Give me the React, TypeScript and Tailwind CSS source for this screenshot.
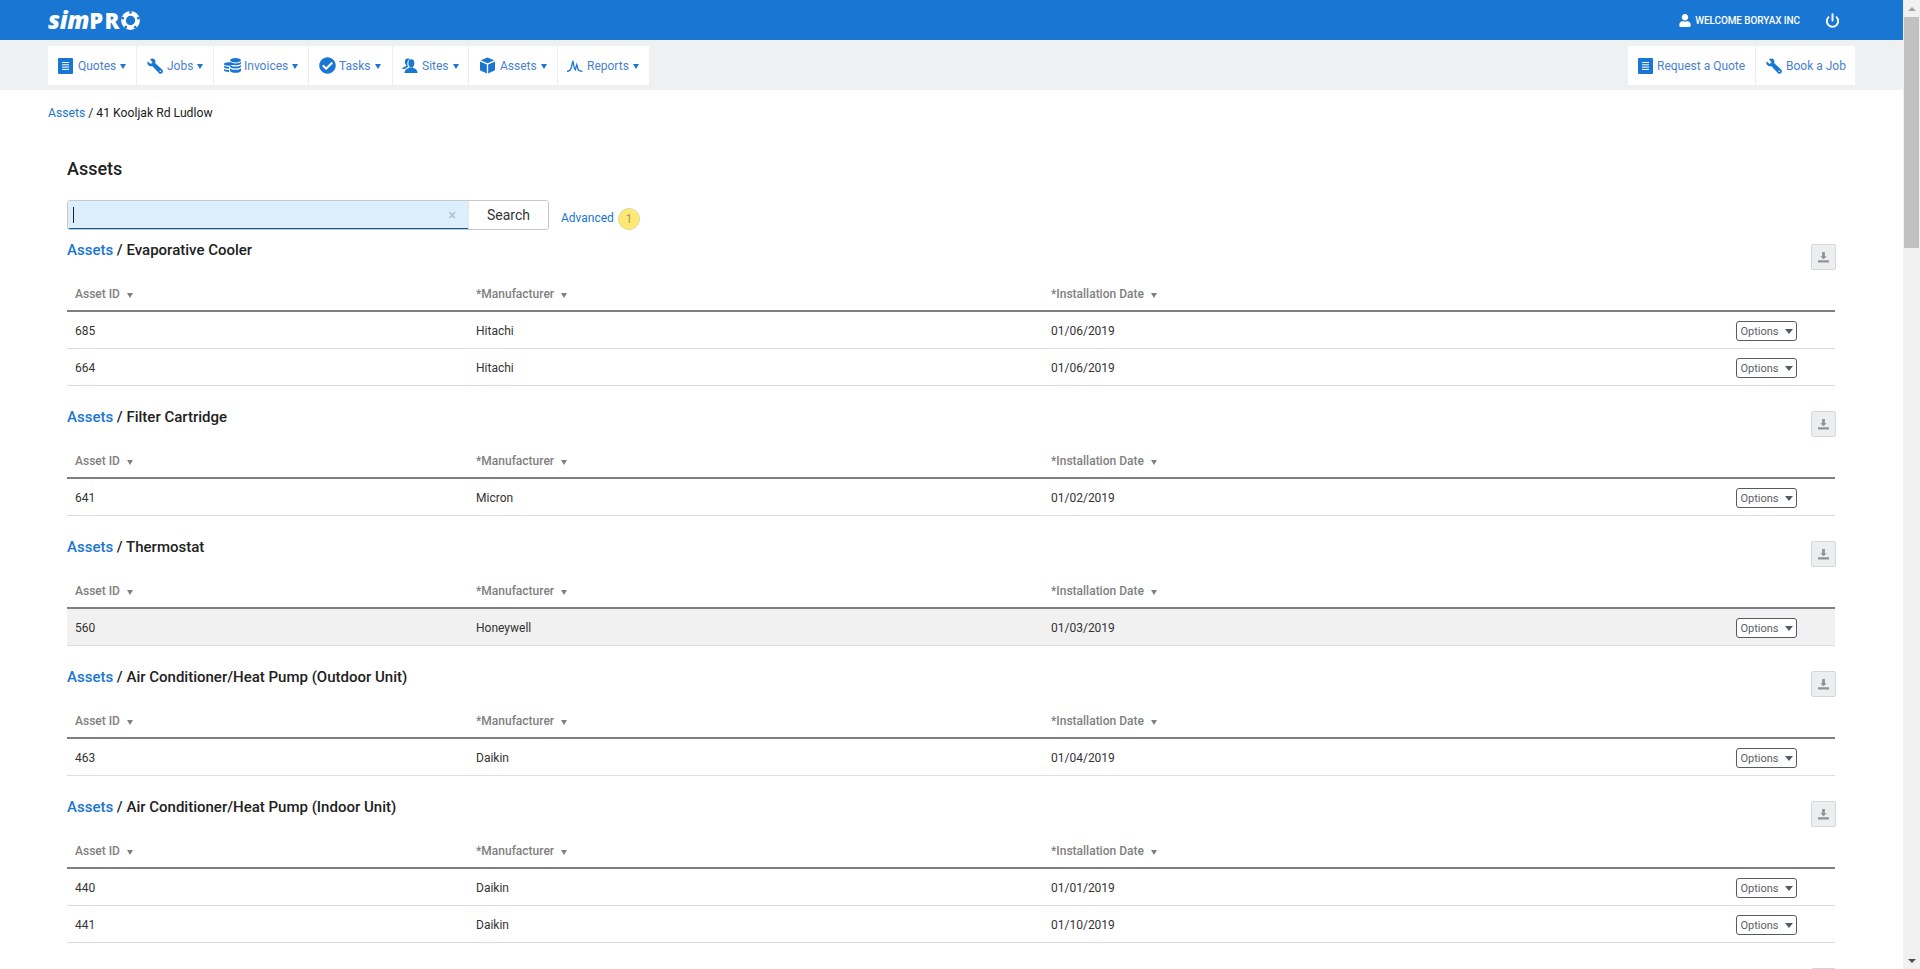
import React from "react";
import { FaCheckCircle, FaUser } from "react-icons/fa";
import { Power } from "lucide-react";

const blue = "#1976d2";

const DocIcon = () => (
  <svg viewBox="0 0 15 16" className="w-[15px] h-[16px] shrink-0">
    <rect x="0" y="0" width="15" height="16" rx="1" fill={blue} />
    <path d="M4 4.500h7M4 6.800h7M4 9.100h7M4 11.400h7" stroke="#fff" strokeWidth="1" />
  </svg>
);

const WrenchIcon = () => (
  <svg viewBox="0 0 16 16" className="w-[16px] h-[16px] shrink-0">
    <path
      d="M.8 3.500 3.600 6l2-1.800L3 1.200C5-.3 7.800.3 8.300 2.800c.2 1 0 1.800-.2 2.300l7 6.400c1.100 1 1.100 2.500.2 3.500-1 1-2.500 1-3.500-.1L5.200 7.900c-.8.300-1.800.3-2.600 0C.5 7.100-.3 5.300.8 3.500z"
      fill={blue}
    />
    <circle cx="13.300" cy="13.300" r="0.800" fill="#fff" />
  </svg>
);

const CoinsIcon = () => (
  <svg viewBox="0 0 17 15" className="w-[17px] h-[15px] shrink-0">
    <g fill={blue}>
      <ellipse cx="11.500" cy="2.200" rx="5.500" ry="2.200" />
      <path d="M6 3.800c1 1.100 3 1.600 5.500 1.600S16 4.900 17 3.800v1.500c0 1.200-2.500 2-5.500 2S6 6.500 6 5.300z" />
      <path d="M6 7c1 1.100 3 1.600 5.500 1.600S16 8.100 17 7v1.500c0 1.200-2.500 2-5.500 2S6 9.700 6 8.500z" />
      <path d="M6 10.200c1 1.100 3 1.600 5.500 1.600s4.500-.5 5.500-1.600v2.300c0 1.400-2.500 2.300-5.500 2.300S6 13.900 6 12.500z" />
      <ellipse cx="4.700" cy="6" rx="4.700" ry="1.700" />
      <path d="M0 7.500c1 1 2.700 1.400 5 1.400v1.800c-2.800 0-5-.7-5-1.700z" />
      <path d="M0 10.700c1 1 2.700 1.400 5 1.400v1.800c-2.800 0-5-.7-5-1.700z" />
    </g>
  </svg>
);

const SitesIcon = () => (
  <svg viewBox="0 0 18 17" className="w-[16px] h-[16px] shrink-0">
    <g fill={blue}>
      <path d="M6.500 0C4 0 3 2 3.200 4c.1 1.500.8 3 1.800 3.800-.2.600-.6 1-1.400 1.300C2 9.800.6 10.500 0 12h3.500c.8-1.200 2-1.800 3.500-2.300-.5-1-1-2.500-1-4C6 3 7.400 1 9.500 1 8.800.4 7.800 0 6.500 0z" />
      <ellipse cx="10.500" cy="5.500" rx="3.300" ry="4.500" />
      <path d="M8.500 9.500c-.2.800-1 1.300-2.200 1.800-1.700.7-3.100 1.800-3.600 5.200h15c-.5-3.400-1.900-4.500-3.600-5.200-1.200-.5-2-1-2.200-1.800-.6.500-1.300.8-1.700.8s-1.100-.3-1.700-.8z" />
    </g>
  </svg>
);

const CubeIcon = () => (
  <svg viewBox="0 0 16 17" className="w-[15px] h-[17px] shrink-0">
    <g fill={blue}>
      <path d="M8 0 15.200 3 8 6.100.8 3z" />
      <path d="M0 4.200 7.300 7.300V17L0 13.600z" />
      <path d="M16 4.200 8.700 7.300V17l7.300-3.400z" />
    </g>
  </svg>
);

const ReportsIcon = () => (
  <svg viewBox="0 0 16 12" className="w-[16px] h-[12px] shrink-0">
    <path
      d="M0 11.300c2.700 0 3.500-1 4.300-3.800L5.800.8l1.500 7 1 1.800 1.500-5 1.200 4.700c.6 1.600 1.500 2 4.500 2"
      fill="none"
      stroke={blue}
      strokeWidth="1.300"
    />
  </svg>
);

const Caret = () => <span className="inline-block ml-[4px] border-x-[3.5px] border-x-transparent border-t-[5px] border-t-[#1976d2] translate-y-[1px]" />;

const navItems = [
  { label: "Quotes", icon: <DocIcon />, cls: "w-[88px] pl-[10px] gap-[5px]" },
  { label: "Jobs", icon: <WrenchIcon />, cls: "w-[77px] pl-[10px] gap-[4px]" },
  { label: "Invoices", icon: <CoinsIcon />, cls: "w-[95px] pl-[10px] gap-[3px]" },
  { label: "Tasks", icon: <FaCheckCircle className="w-[17px] h-[17px] shrink-0 text-[#1976d2]" />, cls: "w-[84px] pl-[10px] gap-[3px]" },
  { label: "Sites", icon: <SitesIcon />, cls: "w-[76px] pl-[9px] gap-[4px]" },
  { label: "Assets", icon: <CubeIcon />, cls: "w-[89px] pl-[11px] gap-[5px]" },
  { label: "Reports", icon: <ReportsIcon />, cls: "w-[92px] pl-[9px] gap-[4px]" },
];

const Logo = () => (
  <div className="flex items-center text-white font-['Open_Sans',sans-serif] font-extrabold leading-none">
    <span className="italic text-[24px] tracking-[-0.3px]">sim</span>
    <span className="text-[22px] tracking-[1.5px]">PR</span>
    <svg viewBox="0 0 20 20" className="w-[19px] h-[19px]">
      <circle cx="10" cy="10" r="7.400" fill="none" stroke="#fff" strokeWidth="5" />
      <g fill={blue}>
        <circle cx="10" cy="1.500" r="1.400" />
        <circle cx="18.200" cy="7.500" r="1.400" />
        <circle cx="15" cy="17" r="1.400" />
        <circle cx="5" cy="17" r="1.400" />
        <circle cx="1.800" cy="7.500" r="1.400" />
      </g>
    </svg>
  </div>
);

const HeaderCell = ({ label }: { label: string }) => (
  <span className="flex items-center text-[12px] font-medium text-[#808080]">
    {label}
    <span className="ml-[7px] border-x-[3px] border-x-transparent border-t-[5px] border-t-[#808080] translate-y-[1px]" />
  </span>
);

type Row = { id: string; maker: string; date: string; hover?: boolean };

const sections: { title: string; rows: Row[] }[] = [
  {
    title: "Evaporative Cooler",
    rows: [
      { id: "685", maker: "Hitachi", date: "01/06/2019" },
      { id: "664", maker: "Hitachi", date: "01/06/2019" },
    ],
  },
  { title: "Filter Cartridge", rows: [{ id: "641", maker: "Micron", date: "01/02/2019" }] },
  { title: "Thermostat", rows: [{ id: "560", maker: "Honeywell", date: "01/03/2019", hover: true }] },
  { title: "Air Conditioner/Heat Pump (Outdoor Unit)", rows: [{ id: "463", maker: "Daikin", date: "01/04/2019" }] },
  {
    title: "Air Conditioner/Heat Pump (Indoor Unit)",
    rows: [
      { id: "440", maker: "Daikin", date: "01/01/2019" },
      { id: "441", maker: "Daikin", date: "01/10/2019" },
    ],
  },
  { title: "Air Conditioner/Heat Pump (Ducted)", rows: [] },
];

const AssetSection = ({ title, rows }: { title: string; rows: Row[] }) => (
  <section className="relative pt-[2px] last:pt-[4px]">
    <h3 className="h-[24px] text-[15px] font-medium leading-[24px] text-[#212121]">
      <a className="text-[#1976d2]">Assets</a> / {title}
    </h3>
    <button className="absolute right-[-1px] top-[8px] w-[25px] h-[26px] flex items-center justify-center bg-[#eceef0] border border-[#d5d7d9] rounded-[2px]">
      <svg viewBox="0 0 14 12" className="w-[13px] h-[11px]">
        <path d="M5.500 0h3v4.500h2L7 8 3.500 4.500h2zM1 9h12v2.500H1z" fill="#8f9396" />
      </svg>
    </button>
    <div className="grid grid-cols-[401px_575px_1fr] items-center h-[40px] pt-[6px] mt-[10px] px-[8px] border-b-2 border-b-[#7f7f7f]">
      <HeaderCell label="Asset ID" />
      <HeaderCell label="*Manufacturer" />
      <HeaderCell label="*Installation Date" />
    </div>
    {rows.map((r) => (
      <div
        key={r.id}
        className={`grid grid-cols-[401px_575px_1fr_auto] items-center h-[37px] pt-[1px] pl-[8px] pr-[38px] border-b border-b-[#dddddd] text-[12px] text-[#333333] ${r.hover ? "bg-[#f1f1f1]" : ""}`}
      >
        <span>{r.id}</span>
        <span>{r.maker}</span>
        <span>{r.date}</span>
        <button className="w-[61px] h-[20px] flex items-center justify-center border border-[#555b61] rounded-[3px] bg-white text-[11px] leading-[19px] text-[#5a6066]">
          <span className="translate-y-[1px]">Options</span>
          <span className="ml-[6px] border-x-[4px] border-x-transparent border-t-[5px] border-t-[#555b61] translate-y-[1px]" />
        </button>
      </div>
    ))}
  </section>
);

const Scrollbar = () => (
  <div className="w-[17px] h-full shrink-0 bg-[#f1f1f1] flex flex-col items-center">
    <div className="h-[17px] flex items-center justify-center">
      <span className="border-x-[4px] border-x-transparent border-b-[4px] border-b-[#a3a3a3]" />
    </div>
    <div className="w-[15px] h-[231px] bg-[#c1c1c1]" />
    <div className="flex-1" />
    <div className="h-[17px] flex items-center justify-center">
      <span className="border-x-[4px] border-x-transparent border-t-[4px] border-t-[#505050]" />
    </div>
  </div>
);

export default function App() {
  return (
    <div className="flex w-[1920px] h-[969px] overflow-hidden bg-white font-['Roboto',sans-serif]">
      <div className="flex-1 min-w-0 h-full overflow-hidden">
        <header className="h-[40px] bg-[#1976d2] flex items-center justify-between pl-[48px] pr-[63px]">
          <Logo />
          <div className="flex items-center text-white">
            <FaUser className="w-[14px] h-[13px] mr-[3px]" />
            <span className="text-[10px] font-medium tracking-[-0.1px]">WELCOME BORYAX INC</span>
            <Power className="w-[15px] h-[15px] ml-[25px]" strokeWidth={3} />
          </div>
        </header>

        <nav className="h-[50px] bg-[#eff0f2] flex justify-between pl-[48px] pr-[48px] pt-[6px]">
          <div className="flex h-[39px] bg-white">
            {navItems.map((item, i) => (
              <a
                key={item.label}
                className={`${item.cls} flex items-center text-[12px] text-[#4a7fd0] ${i > 0 ? "border-l border-l-[#eceef0]" : ""}`}
              >
                {item.icon}
                <span className="flex items-center">
                  {item.label}
                  <Caret />
                </span>
              </a>
            ))}
          </div>
          <div className="flex h-[39px] bg-white">
            <a className="w-[127px] flex items-center gap-[4px] pl-[10px] text-[12px] text-[#4a7fd0]">
              <DocIcon />
              Request a Quote
            </a>
            <a className="w-[100px] flex items-center gap-[4px] pl-[10px] text-[12px] text-[#4a7fd0] border-l border-l-[#eceef0]">
              <WrenchIcon />
              Book a Job
            </a>
          </div>
        </nav>

        <div className="pl-[48px] pt-[16px] h-[31px] text-[12.2px] leading-[15px] text-[#212121]">
          <a className="text-[#1976d2]">Assets</a> / 41 Kooljak Rd Ludlow
        </div>

        <main className="pl-[67px] pr-[68px]">
          <h1 className="mt-[36px] text-[18px] leading-[24px] font-medium text-[#212121]">Assets</h1>
          <div className="flex items-start mt-[19px]">
            <div className="flex w-[482px] h-[30px] border border-[#c8c8c8] rounded-[3px] overflow-hidden">
              <div className="relative flex-1 bg-[#dcedfb] border-b border-b-[#0f5a9a] flex items-center pl-[5px]">
                <span className="w-px h-[16px] bg-[#212121]" />
                <span className="absolute right-[12px] top-[4px] text-[14px] text-[#b5bcc2]">×</span>
              </div>
              <button className="w-[80px] bg-white text-[14px] text-[#333333] border-l border-l-[#e5e5e5]">Search</button>
            </div>
            <a className="ml-[12px] mt-[11px] text-[12px] text-[#1976d2] leading-[14px]">Advanced</a>
            <span className="ml-[4px] mt-[8px] w-[22px] h-[22px] rounded-full bg-[#ffe974] border border-[#e0d8a0] flex items-center justify-center text-[12px] text-[#9a9a66]">1</span>
          </div>
          <div className="flex flex-col gap-[17px] mt-[6px]">
            {sections.map((s) => (
              <AssetSection key={s.title} title={s.title} rows={s.rows} />
            ))}
          </div>
        </main>
      </div>
      <Scrollbar />
    </div>
  );
}
